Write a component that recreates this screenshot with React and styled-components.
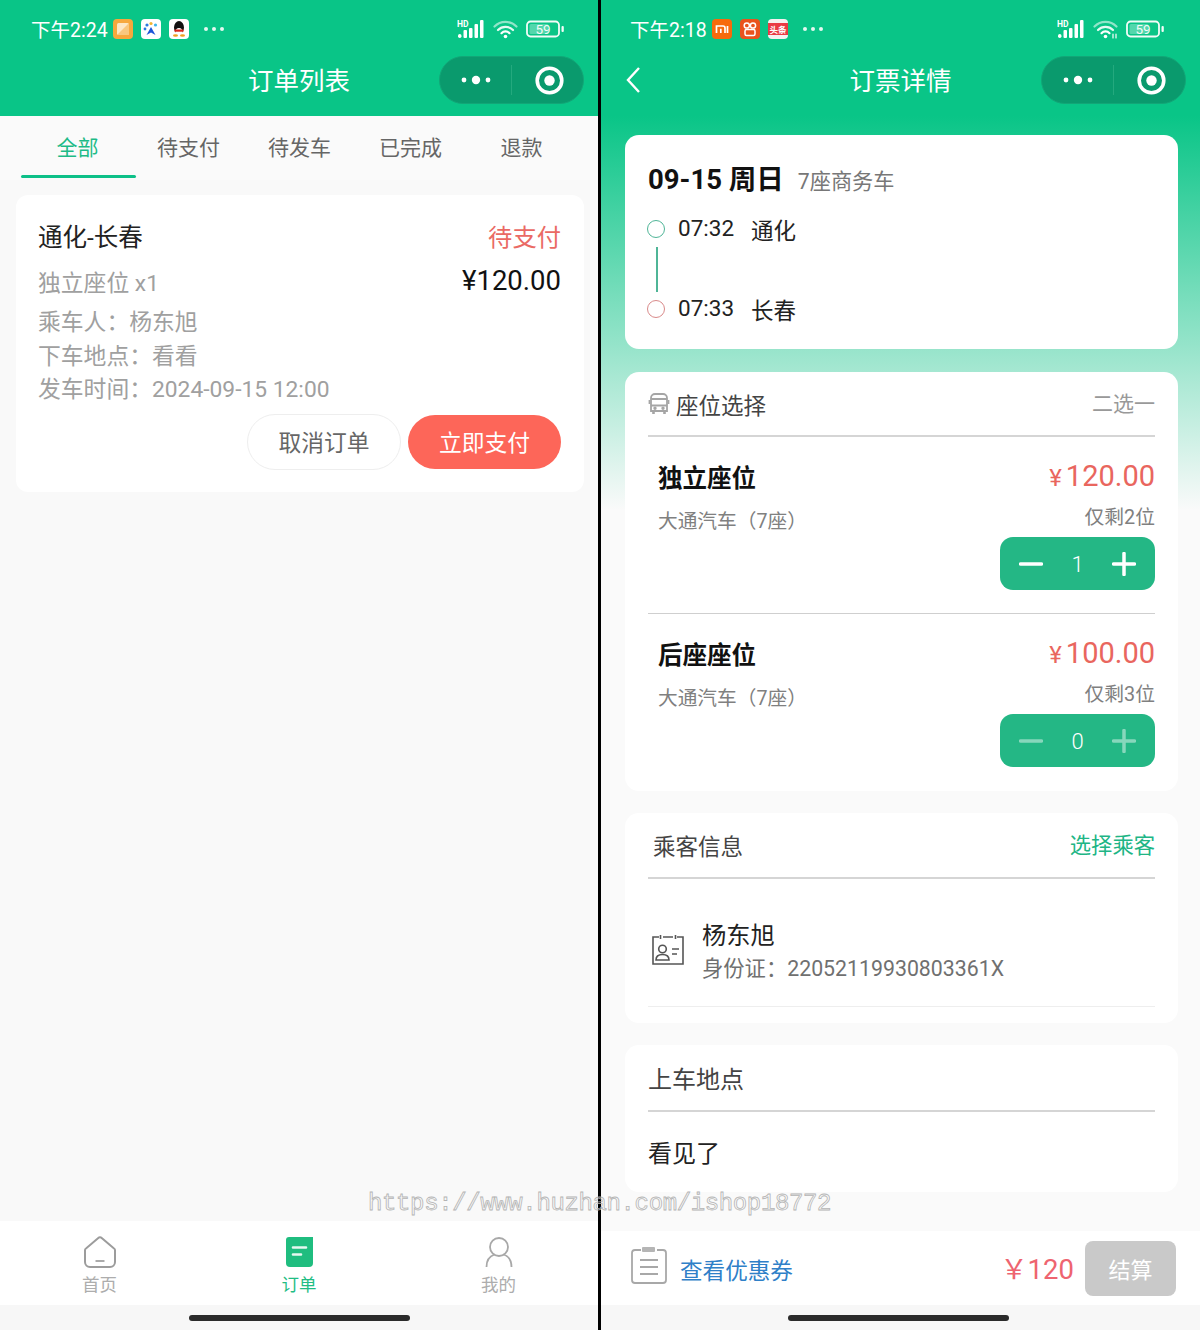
import styled, { createGlobalStyle } from "styled-components";

const GlobalStyle = createGlobalStyle`
  * { box-sizing: border-box; }
  html, body { margin: 0; padding: 0; }
  body {
    font-family: Roboto, "Noto Sans CJK SC", sans-serif;
    background: #000;
  }
`;

const Screen = styled.div`
  position: relative;
  width: 1200px;
  height: 1330px;
  display: flex;
  background: #000;
  overflow: hidden;
`;

const Phone = styled.section`
  width: ${(p) => p.$width}px;
  height: 1330px;
  display: flex;
  flex-direction: column;
  background: #f9f9f9;
`;

const Header = styled.header`
  height: 116px;
  flex-shrink: 0;
  background: #09c587;
  color: #fff;
`;

const StatusBar = styled.div`
  height: 56px;
  padding: 2px ${(p) => p.$right}px 0 ${(p) => p.$left}px;
  display: flex;
  align-items: center;
`;

const Clock = styled.span`
  font-size: 19.5px;
  margin: -2px 5px 0 0;
`;

const AppIcons = styled.div`
  display: flex;
  gap: 8px;
`;

const MoreDots = styled.div`
  display: flex;
  gap: 4px;
  margin-left: 15px;
  i {
    width: 4px;
    height: 4px;
    border-radius: 50%;
    background: #e6f8f1;
  }
`;

const StatusRight = styled.div`
  margin-left: auto;
  display: flex;
  align-items: center;
  gap: 8px;
`;

const NavRow = styled.div`
  height: 47px;
  padding: 0 14px;
  display: grid;
  grid-template-columns: 1fr auto 1fr;
  align-items: center;
`;

const BackButton = styled.div`
  padding-left: 10px;
  display: flex;
  align-items: center;
`;

const NavTitle = styled.h1`
  margin: 3px 0 0;
  font-size: 25.5px;
  font-weight: 400;
  line-height: 1.2;
`;

const Capsule = styled.div`
  justify-self: end;
  width: 145px;
  height: 48px;
  border-radius: 24px;
  background: #0a9a6d;
  border: 1px solid #12a677;
  display: flex;
  align-items: center;
`;

const CapsulePart = styled.div`
  width: 71px;
  padding-left: ${(p) => p.$shift || 0}px;
  display: flex;
  justify-content: center;
  align-items: center;
`;

const CapsuleLine = styled.div`
  width: 1px;
  height: 30px;
  background: #24a97e;
`;

const Tabs = styled.nav`
  height: 64px;
  padding-left: 22px;
  display: grid;
  grid-template-columns: repeat(5, 111px);
  background: #fafafa;
`;

const Tab = styled.div`
  position: relative;
  display: flex;
  justify-content: center;
  padding-top: 17px;
  font-size: 21px;
  line-height: 30px;
  color: ${(p) => (p.$active ? "#1dbb87" : "#666")};
  &::after {
    content: "";
    display: ${(p) => (p.$active ? "block" : "none")};
    position: absolute;
    left: -1px;
    right: -3px;
    top: 59px;
    height: 3px;
    border-radius: 2px;
    background: #0dc088;
  }
`;

const OrderList = styled.main`
  flex: 1;
  padding: 15px 14px 0 16px;
`;

const OrderCard = styled.article`
  height: 297px;
  padding: 26px 23px 0 22px;
  border-radius: 12px;
  background: #fff;
`;

const OrderRow = styled.div`
  display: flex;
  justify-content: space-between;
  align-items: ${(p) => p.$align || "center"};
`;

const Route = styled.div`
  font-size: 24.5px;
  line-height: 34px;
  color: #222;
`;

const OrderStatus = styled.div`
  font-size: 24.3px;
  line-height: 34px;
  color: #ea6a64;
`;

const SeatText = styled.div`
  font-size: 22.8px;
  line-height: 34px;
  margin-top: 12px;
  color: #a0a0a0;
`;

const Amount = styled.div`
  font-size: 27.5px;
  line-height: 34px;
  margin-top: 9px;
  color: #111;
`;

const OrderLines = styled.div`
  margin-top: 5px;
  font-size: 22.8px;
  line-height: 33.5px;
  color: #a0a0a0;
`;

const OrderActions = styled.div`
  margin-top: 7px;
  display: flex;
  justify-content: flex-end;
  align-items: center;
  gap: 7px;
`;

const PillButton = styled.button`
  width: ${(p) => (p.$primary ? 153 : 154)}px;
  height: ${(p) => (p.$primary ? 54 : 56)}px;
  border-radius: 28px;
  border: ${(p) => (p.$primary ? "none" : "1px solid #eee")};
  background: ${(p) => (p.$primary ? "#fd6659" : "#fff")};
  color: ${(p) => (p.$primary ? "#fff" : "#666")};
  font: inherit;
  font-size: 22.8px;
  padding: 0;
`;

const TabBar = styled.footer`
  height: 84px;
  flex-shrink: 0;
  display: grid;
  grid-template-columns: 199px 200px 199px;
  background: #fff;
`;

const TabBarItem = styled.div`
  display: flex;
  flex-direction: column;
  align-items: center;
  padding-top: 15px;
  font-size: 17.5px;
  line-height: 24px;
  color: ${(p) => (p.$active ? "#1fbd84" : "#adadad")};
  svg {
    margin-bottom: 5px;
  }
`;

const HomeArea = styled.div`
  height: 25px;
  flex-shrink: 0;
  padding: 10px ${(p) => p.$shift || 0}px 0 0;
  background: #f7f7f7;
  display: flex;
  justify-content: center;
`;

const HomeBar = styled.div`
  width: 221px;
  height: 6px;
  border-radius: 3px;
  background: #2b2b2b;
`;

const Divider = styled.div`
  width: 3px;
  flex-shrink: 0;
  background: #000;
`;

const Detail = styled.main`
  flex: 1;
  padding: 19px 22px 0 24px;
  display: flex;
  flex-direction: column;
  gap: 22px;
  background: linear-gradient(#09c587 0, #fafafa 394px);
`;

const Card = styled.div`
  height: ${(p) => p.$height}px;
  flex-shrink: 0;
  margin-bottom: ${(p) => p.$after || 0}px;
  padding: ${(p) => p.$padding || "0 23px"};
  border-radius: 14px;
  background: #fff;
`;

const DateRow = styled.div`
  display: flex;
  align-items: baseline;
  gap: 14px;
`;

const DateText = styled.strong`
  font-size: 27.5px;
  line-height: 40px;
  font-weight: 700;
  color: #111;
`;

const CarType = styled.span`
  font-size: 21.2px;
  color: #777;
`;

const Stops = styled.div`
  margin-top: 14px;
  display: grid;
  grid-template-columns: 30px 73px auto;
  grid-template-rows: 30px 50px 30px;
  justify-content: start;
  align-items: center;
`;

const StopDot = styled.span`
  width: 18px;
  height: 18px;
  margin-left: -1px;
  border-radius: 50%;
  border: 1.6px solid ${(p) => p.$color};
`;

const StopLine = styled.span`
  grid-column: 1 / 4;
  width: 2px;
  height: 45px;
  margin-left: 8px;
  background: #4fb597;
`;

const StopTime = styled.span`
  font-size: 22.5px;
  color: #222;
  margin-top: -3px;
`;

const StopCity = styled.span`
  font-size: 22.5px;
  margin-top: -1px;
  color: #222;
`;

const SectionHead = styled.div`
  height: ${(p) => p.$height || 65}px;
  display: flex;
  align-items: center;
  justify-content: space-between;
  border-bottom: 2px solid #d5d5d5;
  padding-left: ${(p) => p.$indent || 0}px;
`;

const SectionTitle = styled.div`
  display: flex;
  align-items: center;
  gap: 6px;
  font-size: ${(p) => p.$size || 22.5}px;
  color: #444;
`;

const SectionHint = styled.span`
  margin-top: -3px;
  font-size: ${(p) => p.$size || 21}px;
  color: ${(p) => p.$color || "#999"};
`;

const Seat = styled.div`
  height: ${(p) => (p.$last ? 176 : 177)}px;
  padding: 22px 0 0 10px;
  display: grid;
  grid-template-columns: 1fr auto;
  border-bottom: ${(p) => (p.$last ? "none" : "1px solid #cfcfcf")};
`;

const SeatInfo = styled.div`
  display: flex;
  flex-direction: column;
`;

const SeatName = styled.strong`
  font-size: 24.5px;
  line-height: 40px;
  font-weight: 700;
  color: #111;
`;

const SeatCar = styled.span`
  margin-top: 9px;
  font-size: 19.7px;
  line-height: 28px;
  color: #808080;
`;

const SeatBuy = styled.div`
  margin-top: -3px;
  display: flex;
  flex-direction: column;
  align-items: flex-end;
`;

const Price = styled.div`
  display: flex;
  align-items: baseline;
  gap: 4px;
  font-size: 29px;
  line-height: 40px;
  color: #e9665e;
`;

const PriceSign = styled.span`
  font-size: 24px;
`;

const Remain = styled.div`
  margin-top: 5px;
  font-size: 19.8px;
  line-height: 30px;
  color: #808080;
`;

const Stepper = styled.div`
  margin-top: 4px;
  width: 155px;
  height: 53px;
  padding: 0 19px;
  border-radius: 13px;
  background: #24b785;
  color: #fff;
  display: flex;
  justify-content: space-between;
  align-items: center;
`;

const StepCount = styled.span`
  margin-top: 2px;
  font-size: 22px;
  font-weight: 300;
`;

const Passenger = styled.div`
  height: 128px;
  padding: 18px 0 0 3px;
  display: flex;
  align-items: center;
  gap: 17px;
  border-bottom: 1px solid #eee;
  svg {
    margin-top: -4px;
  }
`;

const PassengerName = styled.div`
  font-size: 24.3px;
  line-height: 34px;
  color: #222;
`;

const PassengerId = styled.div`
  font-size: 21.3px;
  line-height: 32px;
  color: #707070;
`;

const PickupValue = styled.div`
  padding-top: 22px;
  font-size: 24px;
  line-height: 40px;
  color: #222;
`;

const BottomGap = styled.div`
  flex: 1;
`;

const CheckoutBar = styled.footer`
  height: 74px;
  flex-shrink: 0;
  padding: 0 24px 0 30px;
  display: flex;
  align-items: center;
  background: #fff;
  svg {
    margin-top: -7px;
  }
`;

const CouponLink = styled.span`
  margin: 2px 0 0 13px;
  font-size: 22.6px;
  color: #2f80c8;
`;

const Total = styled.span`
  margin: -2px 11px 0 auto;
  font-size: 27.5px;
  color: #ee6470;
`;

const PayButton = styled.button`
  width: 91px;
  height: 55px;
  margin-top: 1px;
  padding: 0 0 2px;
  border: none;
  border-radius: 8px;
  background: #c9c9c9;
  color: #fff;
  font: inherit;
  font-size: 22px;
`;

const Watermark = styled.div`
  position: absolute;
  left: 368px;
  top: 1188px;
  font-family: "Liberation Mono", monospace;
  font-size: 24px;
  line-height: 32px;
  letter-spacing: -0.37px;
  white-space: nowrap;
  color: transparent;
  -webkit-text-stroke: 0.8px #b4b4b4;
`;

const Tile = ({ bg, children }) => (
  <svg width="20" height="20" viewBox="0 0 20 20">
    <rect width="20" height="20" rx="4" fill={bg} />
    {children}
  </svg>
);

const AppsLeft = () => (
  <AppIcons>
    <Tile bg="#f7a83d">
      <rect x="4" y="4" width="12" height="12" rx="1.5" fill="#fde7c4" />
      <path d="M4 16 16 4v12z" fill="#f9c77e" />
    </Tile>
    <Tile bg="#fff">
      <circle cx="6" cy="6" r="1.6" fill="#2a79e0" />
      <circle cx="10" cy="4.5" r="1.6" fill="#f2b632" />
      <circle cx="14.5" cy="6" r="1.6" fill="#3fb6e8" />
      <circle cx="4" cy="10" r="1.4" fill="#2a79e0" />
      <path d="M10 8l4.5 8-4.5-2.5L5.5 16z" fill="#1c56d8" />
    </Tile>
    <Tile bg="#fff">
      <ellipse cx="10" cy="8.500" rx="5" ry="6.500" fill="#111" />
      <ellipse cx="10" cy="12.500" rx="3.400" ry="3.500" fill="#fff" />
      <path d="M5.500 10.500h9v2.200h-9z" fill="#d9261c" />
      <ellipse cx="6.500" cy="16.500" rx="2.500" ry="1.200" fill="#f0a020" />
      <ellipse cx="13.500" cy="16.500" rx="2.500" ry="1.200" fill="#f0a020" />
    </Tile>
  </AppIcons>
);

const AppsRight = () => (
  <AppIcons>
    <Tile bg="#f76a0c">
      <path d="M4.500 14V7h6.500a2 2 0 0 1 2 2v5M8.800 14V9.800M15.500 14V7" fill="none" stroke="#fff" strokeWidth="1.700" />
    </Tile>
    <Tile bg="#e9531d">
      <circle cx="6.800" cy="6.500" r="2.600" fill="none" stroke="#fff" strokeWidth="1.500" />
      <circle cx="13" cy="6.500" r="2.600" fill="none" stroke="#fff" strokeWidth="1.500" />
      <rect x="5" y="10.500" width="10" height="6" rx="1.500" fill="none" stroke="#fff" strokeWidth="1.500" />
    </Tile>
    <Tile bg="#f6f0f0">
      <rect y="4" width="20" height="12" fill="#ea3a44" />
      <text x="10" y="13.500" textAnchor="middle" fontSize="8.500" fontWeight="700" fill="#fff">头条</text>
    </Tile>
  </AppIcons>
);

const Signal = () => (
  <svg width="28" height="20" viewBox="0 0 28 20">
    <text x="0" y="7.500" fontSize="8.500" fontWeight="700" fill="#fff">HD</text>
    <g fill="#fff">
      <rect x="1" y="15" width="3.500" height="4" rx="1.700" />
      <rect x="6.500" y="11" width="3.500" height="8" rx="1" />
      <rect x="12" y="9" width="3.500" height="10" rx="1" />
      <rect x="17.500" y="5" width="3.500" height="14" rx="1" />
      <rect x="23" y="1" width="3.500" height="18" rx="1" />
    </g>
  </svg>
);

const Wifi = ({ extra }) => (
  <svg width="25" height="20" viewBox="0 0 25 20" fill="none" stroke="#fff" strokeLinecap="round">
    <path d="M1.500 7.500a15.500 15.500 0 0 1 22 0" strokeWidth="2.200" opacity="0.55" />
    <path d="M5 11a10.500 10.500 0 0 1 15 0" strokeWidth="2.200" opacity="0.9" />
    <path d="M8.500 14.200a5.500 5.500 0 0 1 8 0" strokeWidth="2.200" />
    <circle cx="12.500" cy="17.500" r="1.800" fill="#fff" stroke="none" />
    {extra && <path d="M20 15v4M23 15v4" strokeWidth="1.200" />}
  </svg>
);

const Battery = () => (
  <svg width="38" height="20" viewBox="0 0 38 20">
    <rect x="1" y="2.500" width="32" height="15" rx="3.500" fill="none" stroke="#f2fcf8" strokeWidth="1.800" />
    <rect x="3.500" y="5" width="19" height="10" rx="1.500" fill="#53d7ac" />
    <rect x="35.500" y="7" width="2.300" height="6" rx="1" fill="#f2fcf8" />
    <text x="17" y="15" textAnchor="middle" fontSize="13.500" fill="#f2fcf8">59</text>
  </svg>
);

const CapsuleDots = () => (
  <svg width="30" height="10" viewBox="0 0 30 10" fill="#fff">
    <circle cx="3" cy="5" r="2.400" />
    <circle cx="15" cy="5" r="4.200" />
    <circle cx="27" cy="5" r="2.400" />
  </svg>
);

const CapsuleTarget = () => (
  <svg width="29" height="29" viewBox="0 0 29 29">
    <circle cx="14.500" cy="14.500" r="12.300" fill="none" stroke="#fff" strokeWidth="3.600" />
    <circle cx="14.500" cy="14.500" r="5.200" fill="#fff" />
  </svg>
);

const BackIcon = () => (
  <svg width="16" height="28" viewBox="0 0 16 28" fill="none" stroke="#fff" strokeWidth="2.400">
    <path d="M14 2 3 14l11 12" />
  </svg>
);

const HomeIcon = () => (
  <svg width="34" height="32" viewBox="0 0 34 32" fill="none" stroke="#9c9c9c" strokeWidth="2">
    <path d="M15 2.200a3 3 0 0 1 4 0l12 10.300a2 2 0 0 1 1 2V26a5 5 0 0 1-5 5H7a5 5 0 0 1-5-5V14.500a2 2 0 0 1 1-2z" />
    <path d="M12.500 25h9" stroke="#aaa" />
  </svg>
);

const OrderIcon = () => (
  <svg width="34" height="32" viewBox="0 0 34 32">
    <path d="M4 4a3 3 0 0 1 3-3h24v26a4 4 0 0 1-4 4H8a4 4 0 0 1-4-4z" fill="#1fbd7f" />
    <path d="M11 11.500h13M11 18.500h8" stroke="#e6f8f0" strokeWidth="2.600" strokeLinecap="round" />
  </svg>
);

const UserIcon = () => (
  <svg width="34" height="32" viewBox="0 0 34 32" fill="none" stroke="#a8a8a8" strokeWidth="1.800">
    <circle cx="17" cy="11" r="9" />
    <path d="M4.500 31c0-7 3.500-11 8-12.500M29.500 31c0-7-3.500-11-8-12.500" />
  </svg>
);

const BusIcon = () => (
  <svg width="22" height="24" viewBox="0 0 22 24" fill="none" stroke="#a5a5a5" strokeWidth="1.800">
    <path d="M3 6a4 4 0 0 1 4-4h8a4 4 0 0 1 4 4v13H3z" />
    <path d="M3 7h16M3 13.500h16M1.500 8v4M20.500 8v4" />
    <path d="M5.500 19v3M16.500 19v3" strokeWidth="2.600" />
    <circle cx="7" cy="16.300" r="0.800" fill="#a5a5a5" />
    <circle cx="15" cy="16.300" r="0.800" fill="#a5a5a5" />
  </svg>
);

const IdCardIcon = () => (
  <svg width="34" height="32" viewBox="0 0 34 32" fill="none" stroke="#555" strokeWidth="1.600">
    <path d="M8 3H2v27h30V3h-6M12 3h10" />
    <path d="M9.500 1v4M24.500 1v4" />
    <circle cx="11.500" cy="15" r="3.800" />
    <path d="M5 26c0-4 3-5.500 6.500-5.500S18 22 18 26z" />
    <path d="M21 15h7M21 20h5" />
  </svg>
);

const ClipboardIcon = () => (
  <svg width="36" height="38" viewBox="0 0 36 38" fill="none" stroke="#a8a8a8" strokeWidth="1.800">
    <path d="M10 4H4a3 3 0 0 0-3 3v27a3 3 0 0 0 3 3h28a3 3 0 0 0 3-3V7a3 3 0 0 0-3-3h-6" />
    <rect x="11" y="1" width="13" height="5" rx="1" fill="#b5b5b5" stroke="none" />
    <path d="M9 14h18M9 21h18M9 28h18" />
  </svg>
);

const StepIcon = ({ plus, dim }) => (
  <svg width="24" height="24" viewBox="0 0 24 24" stroke="#fff" strokeWidth="3.500" strokeLinecap="round" opacity={dim ? 0.45 : 1}>
    <path d="M1.500 12h21" />
    {plus && <path d="M12 1.500v21" />}
  </svg>
);

const StatusRow = ({ time, apps, wifiExtra, left, right }) => (
  <StatusBar $left={left} $right={right}>
    <Clock>{time}</Clock>
    {apps}
    <MoreDots>
      <i />
      <i />
      <i />
    </MoreDots>
    <StatusRight>
      <Signal />
      <Wifi extra={wifiExtra} />
      <Battery />
    </StatusRight>
  </StatusBar>
);

const Nav = ({ title, back }) => (
  <NavRow>
    <BackButton>{back && <BackIcon />}</BackButton>
    <NavTitle>{title}</NavTitle>
    <Capsule>
      <CapsulePart>
        <CapsuleDots />
      </CapsulePart>
      <CapsuleLine />
      <CapsulePart $shift={3}>
        <CapsuleTarget />
      </CapsulePart>
    </Capsule>
  </NavRow>
);

const seats = [
  { name: "独立座位", price: "120.00", left: "仅剩2位", count: 1 },
  { name: "后座座位", price: "100.00", left: "仅剩3位", count: 0, last: true },
];

const SeatRow = ({ seat }) => (
  <Seat $last={seat.last}>
    <SeatInfo>
      <SeatName>{seat.name}</SeatName>
      <SeatCar>大通汽车（7座）</SeatCar>
    </SeatInfo>
    <SeatBuy>
      <Price>
        <PriceSign>¥</PriceSign>
        {seat.price}
      </Price>
      <Remain>{seat.left}</Remain>
      <Stepper>
        <StepIcon dim={seat.count === 0} />
        <StepCount>{seat.count}</StepCount>
        <StepIcon plus dim={seat.count === 0} />
      </Stepper>
    </SeatBuy>
  </Seat>
);

const App = () => (
  <Screen>
    <GlobalStyle />
    <Phone $width={598}>
      <Header>
        <StatusRow time="下午2:24" apps={<AppsLeft />} left={31} right={34} />
        <Nav title="订单列表" />
      </Header>
      <Tabs>
        <Tab $active>全部</Tab>
        <Tab>待支付</Tab>
        <Tab>待发车</Tab>
        <Tab>已完成</Tab>
        <Tab>退款</Tab>
      </Tabs>
      <OrderList>
        <OrderCard>
          <OrderRow>
            <Route>通化-长春</Route>
            <OrderStatus>待支付</OrderStatus>
          </OrderRow>
          <OrderRow $align="flex-start">
            <SeatText>独立座位 x1</SeatText>
            <Amount>¥120.00</Amount>
          </OrderRow>
          <OrderLines>
            <div>乘车人：杨东旭</div>
            <div>下车地点：看看</div>
            <div>发车时间：2024-09-15 12:00</div>
          </OrderLines>
          <OrderActions>
            <PillButton>取消订单</PillButton>
            <PillButton $primary>立即支付</PillButton>
          </OrderActions>
        </OrderCard>
      </OrderList>
      <TabBar>
        <TabBarItem>
          <HomeIcon />
          首页
        </TabBarItem>
        <TabBarItem $active>
          <OrderIcon />
          订单
        </TabBarItem>
        <TabBarItem>
          <UserIcon />
          我的
        </TabBarItem>
      </TabBar>
      <HomeArea>
        <HomeBar />
      </HomeArea>
    </Phone>
    <Divider />
    <Phone $width={599}>
      <Header>
        <StatusRow time="下午2:18" apps={<AppsRight />} wifiExtra left={29} right={36} />
        <Nav title="订票详情" back />
      </Header>
      <Detail>
        <Card $height={214} $after={1} $padding="25px 23px 0">
          <DateRow>
            <DateText>09-15 周日</DateText>
            <CarType>7座商务车</CarType>
          </DateRow>
          <Stops>
            <StopDot $color="#4fb597" />
            <StopTime>07:32</StopTime>
            <StopCity>通化</StopCity>
            <StopLine />
            <StopDot $color="#d98a8a" />
            <StopTime>07:33</StopTime>
            <StopCity>长春</StopCity>
          </Stops>
        </Card>
        <Card $height={419}>
          <SectionHead>
            <SectionTitle>
              <BusIcon />
              座位选择
            </SectionTitle>
            <SectionHint>二选一</SectionHint>
          </SectionHead>
          {seats.map((seat) => (
            <SeatRow key={seat.name} seat={seat} />
          ))}
        </Card>
        <Card $height={210}>
          <SectionHead $indent={5} $height={66}>
            <SectionTitle>乘客信息</SectionTitle>
            <SectionHint $color="#20b585" $size={21.3}>选择乘客</SectionHint>
          </SectionHead>
          <Passenger>
            <IdCardIcon />
            <div>
              <PassengerName>杨东旭</PassengerName>
              <PassengerId>身份证：22052119930803361X</PassengerId>
            </div>
          </Passenger>
        </Card>
        <Card $height={147}>
          <SectionHead $height={67}>
            <SectionTitle $size={24}>上车地点</SectionTitle>
          </SectionHead>
          <PickupValue>看见了</PickupValue>
        </Card>
        <BottomGap />
      </Detail>
      <CheckoutBar>
        <ClipboardIcon />
        <CouponLink>查看优惠券</CouponLink>
        <Total>￥120</Total>
        <PayButton>结算</PayButton>
      </CheckoutBar>
      <HomeArea $shift={4}>
        <HomeBar />
      </HomeArea>
    </Phone>
    <Watermark>https://www.huzhan.com/ishop18772</Watermark>
  </Screen>
);

export default App;
